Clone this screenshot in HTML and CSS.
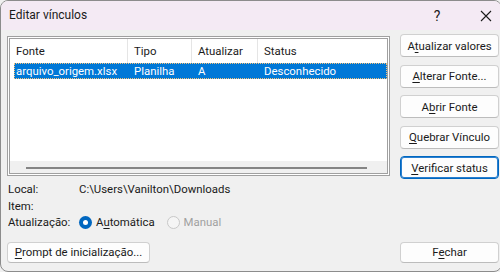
FILE: index.html
```html
<!DOCTYPE html>
<html lang="pt-BR">
<head>
    <meta charset="UTF-8">
    <title>Editar vínculos</title>
    <link rel="stylesheet" href="styles.css">
</head>
<body>
<div class="window">
    <div class="titlebar">
        <span class="title">Editar vínculos</span>
        <span class="title-btn help">?</span>
        <span class="title-btn close">
            <svg width="12" height="12" viewBox="0 0 12 12"><path d="M1 1 L11 11 M11 1 L1 11" stroke="#1a1a1a" stroke-width="1.1" fill="none"/></svg>
        </span>
    </div>

    <div class="dialog">
        <div class="top">
            <div class="list-outer">
                <div class="list-inner">
                    <div class="list-head">
                        <div class="col c1">Fonte</div>
                        <div class="col c2">Tipo</div>
                        <div class="col c3">Atualizar</div>
                        <div class="col c4">Status</div>
                    </div>
                    <div class="list-body">
                        <div class="row selected">
                            <div class="cell c1">arquivo_origem.xlsx</div>
                            <div class="cell c2">Planilha</div>
                            <div class="cell c3">A</div>
                            <div class="cell c4">Desconhecido</div>
                        </div>
                    </div>
                    <div class="hscroll">
                        <div class="thumb"></div>
                    </div>
                </div>
            </div>

            <div class="side-buttons">
                <button class="btn">A<u>t</u>ualizar valores</button>
                <button class="btn"><u>A</u>lterar Fonte...</button>
                <button class="btn">A<u>b</u>rir Fonte</button>
                <button class="btn"><u>Q</u>uebrar Vínculo</button>
                <button class="btn default"><u>V</u>erificar status</button>
            </div>
        </div>

        <div class="info">
            <div class="info-label">Local:</div>
            <div class="info-value">C:\Users\Vanilton\Downloads</div>
            <div class="info-label">Item:</div>
            <div class="info-value"></div>
            <div class="info-label">Atualização:</div>
            <div class="info-value radios">
                <span class="radio checked"></span>
                <span class="radio-text">A<u>u</u>tomática</span>
                <span class="radio disabled"></span>
                <span class="radio-text disabled">Manual</span>
            </div>
        </div>

        <div class="bottom">
            <button class="btn prompt"><u>P</u>rompt de inicialização...</button>
            <button class="btn close-btn">F<u>e</u>char</button>
        </div>
    </div>
</div>
</body>
</html>
```

FILE: styles.css
```css
* {
    margin: 0;
    padding: 0;
    box-sizing: border-box;
}

body {
    font-family: "Segoe UI", Roboto, "Noto Sans", sans-serif;
    font-size: 11.4px;
    color: #1a1a1a;
    background: #f0f0f0;
    width: 500px;
    height: 272px;
    overflow: hidden;
}

u {
    text-decoration: underline;
    text-underline-offset: 2px;
}

.window {
    width: 502px;
    height: 272px;
    border: 1px solid #8c8c8c;
    border-radius: 8px;
    background: #f0f0f0;
    overflow: hidden;
}

.titlebar {
    height: 29px;
    background: #f4eaf4;
    display: flex;
    align-items: center;
    padding: 0 5px 0 8px;
}

.title {
    flex: 1;
    padding-bottom: 1px;
    font-size: 12px;
}

.title-btn {
    flex: none;
    width: 20px;
    display: flex;
    justify-content: center;
    align-items: center;
}

.help {
    font-size: 14px;
}

.close {
    margin-left: 29px;
}

.dialog {
    padding: 6px 0 0 6px;
}

.top {
    display: flex;
    align-items: flex-start;
    gap: 10px;
    width: 492px;
    height: 140px;
}

/* list view */
.list-outer {
    width: 383px;
    height: 140px;
    border: 1px solid #a0a0a0;
    background: #ffffff;
    padding: 1px;
}

.list-inner {
    height: 100%;
    border: 1px solid #a0a0a0;
    background: #ffffff;
    display: flex;
    flex-direction: column;
}

.list-head {
    display: flex;
    height: 24px;
    align-items: stretch;
}

.col {
    padding-left: 6px;
    display: flex;
    align-items: center;
    border-right: 1px solid #e5e5e5;
}

.c1 { width: 118px; }
.c2 { width: 64px; }
.c3 { width: 66px; }
.c4 { flex: 1; border-right: none; }

.list-body {
    flex: 1;
}

.row {
    display: flex;
    height: 16px;
    align-items: center;
    margin-left: 4px;
}

.row .cell.c1 {
    width: 114px;
    padding-left: 2px;
}

.cell {
    padding-left: 6px;
    white-space: nowrap;
}

.row.selected {
    background: #0078d7;
    color: #ffffff;
    outline: 1px dotted #f5c27a;
    outline-offset: -1px;
}

.hscroll {
    height: 12px;
    background: #f0f0f0;
    padding: 6px 0 0 16px;
}

.thumb {
    width: 341px;
    height: 2px;
    background: #858585;
}

/* buttons */
.btn {
    font-family: inherit;
    font-size: 11.4px;
    color: #1a1a1a;
    background: #fdfdfd;
    border: 1px solid #d0d0d0;
    border-bottom-color: #bcbcbc;
    border-radius: 4px;
    height: 23px;
    cursor: pointer;
}

.side-buttons {
    display: flex;
    flex-direction: column;
    gap: 7.5px;
    width: 99px;
    margin-top: -2px;
}

.btn.default {
    border: 1px solid #0067c0;
    box-shadow: inset 0 0 0 1px #2a7fcf;
}

/* info area */
.info {
    display: grid;
    grid-template-columns: 71px 1fr;
    grid-auto-rows: 16.5px;
    align-items: center;
    margin-top: 5px;
    padding-left: 1px;
}

.radios {
    display: flex;
    align-items: center;
}

.radio {
    width: 13px;
    height: 13px;
    border-radius: 50%;
    display: inline-block;
}

.radio.checked {
    background: #0067c0;
    position: relative;
}

.radio.checked::after {
    content: "";
    position: absolute;
    left: 4px;
    top: 4px;
    width: 5px;
    height: 5px;
    border-radius: 50%;
    background: #ffffff;
}

.radio.disabled {
    border: 1px solid #c8c8c8;
    background: #f5f5f5;
    margin-left: 12px;
}

.radio-text {
    margin-left: 4px;
}

.radio-text.disabled {
    color: #a0a0a0;
}

.bottom {
    display: flex;
    justify-content: space-between;
    width: 492px;
    margin-top: 11px;
}

.prompt {
    width: 143px;
    height: 21px;
}

.close-btn {
    width: 99px;
    height: 21px;
}
```
